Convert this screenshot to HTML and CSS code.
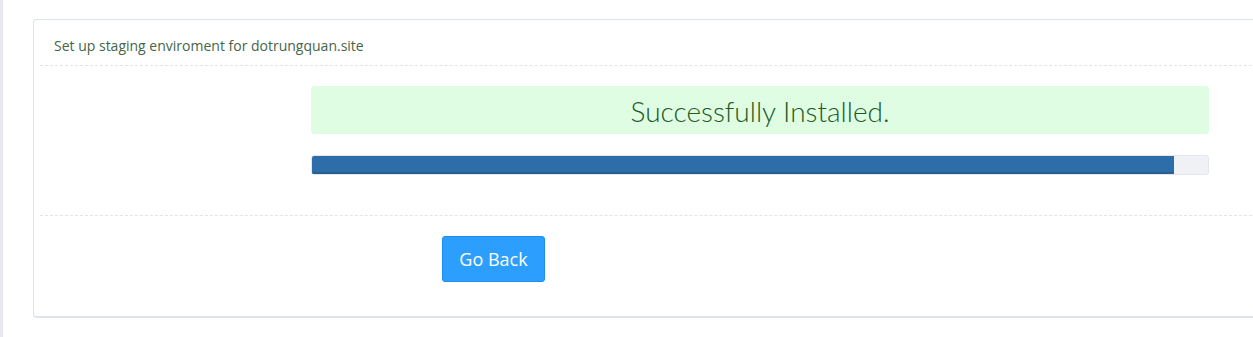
FILE: index.html
```html
<!DOCTYPE html>
<html lang="en">
<head>
  <meta charset="UTF-8">
  <title>Staging</title>
  <link rel="stylesheet" href="styles.css">
</head>
<body>
  <div class="page">
    <div class="panel">
      <div class="panel-heading">Set up staging enviroment for dotrungquan.site</div>

      <div class="panel-body">
        <div class="result">
          <div class="alert-success">Successfully Installed.</div>
          <div class="progress">
            <div class="progress-bar" style="width: 96.2%"></div>
          </div>
        </div>
      </div>

      <div class="panel-footer">
        <button class="btn-back">Go Back</button>
      </div>
    </div>
  </div>
</body>
</html>
```

FILE: styles.css
```css
body {
  margin: 0;
  padding: 0;
  font-family: "Open Sans", Arial, sans-serif;
  background: #fff;
  overflow: hidden;
  height: 337px;
}

.page {
  border-left: 3px solid #e8e8f0;
  height: 100%;
  padding: 19px 0 0 30px;
  box-sizing: border-box;
}

.panel {
  width: 1260px;
  height: 299px;
  border: 1px solid #dde3ea;
  border-bottom: 2px solid #dde3ea;
  border-radius: 4px;
  background: #fff;
  box-sizing: border-box;
}

.panel-heading {
  margin: 0 0 0 6px;
  padding: 16px 0 0 14px;
  height: 29px;
  font-size: 14px;
  color: #456548;
  border-bottom: 1px dashed #e2e4e8;
}

.panel-body {
  margin-left: 6px;
  padding: 20px 0 0 271px;
  height: 150px;
  border-bottom: 1px dashed #e2e4e8;
  box-sizing: border-box;
}

.result {
  width: 898px;
}

.alert-success {
  background: #dffde3;
  border-radius: 3px;
  height: 48px;
  line-height: 50px;
  text-align: center;
  font-family: Lato, "Open Sans", sans-serif;
  font-weight: 300;
  font-size: 28px;
  color: #1d5a24;
}

.progress {
  margin-top: 21px;
  height: 20px;
  background: #f0f1f5;
  border: 1px solid #e4e6ee;
  border-radius: 3px;
  box-sizing: border-box;
  overflow: hidden;
}

.progress-bar {
  height: 100%;
  background: #2d6da9;
  box-shadow: inset 0 -2px 0 #285f93;
}

.panel-footer {
  padding: 20px 0 0 408px;
}

.btn-back {
  font-family: "Open Sans", Arial, sans-serif;
  font-size: 18px;
  color: #fff;
  background: #2c9ffe;
  border: 1px solid #1b8ff0;
  border-radius: 3px;
  width: 103px;
  height: 46px;
  padding: 0;
  cursor: pointer;
}
```
